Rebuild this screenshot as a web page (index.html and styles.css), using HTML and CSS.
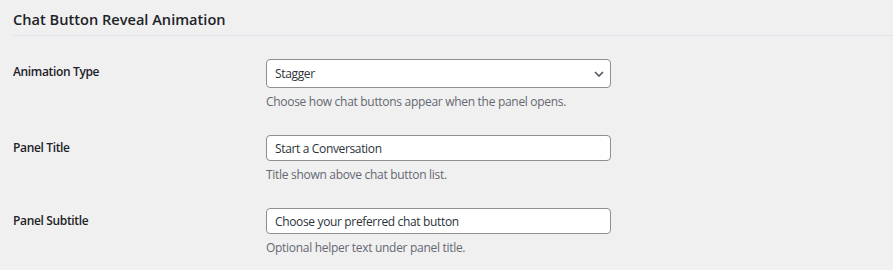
FILE: index.html
```html
<!DOCTYPE html>
<html>
<head>
<meta charset="utf-8">
<link rel="stylesheet" href="styles.css">
</head>
<body>
<div class="wrap">
  <h2 class="section-title">Chat Button Reveal Animation</h2>
  <div class="form-table">
    <div class="row">
      <div class="label">Animation Type</div>
      <div class="field">
        <div class="select">
          <span>Stagger</span>
          <svg class="chev" width="10" height="6" viewBox="0 0 10 6"><path d="M1 1l4 4 4-4" fill="none" stroke="#50575e" stroke-width="1.6"/></svg>
        </div>
        <p class="desc">Choose how chat buttons appear when the panel opens.</p>
      </div>
    </div>
    <div class="row">
      <div class="label">Panel Title</div>
      <div class="field">
        <div class="input">Start a Conversation</div>
        <p class="desc">Title shown above chat button list.</p>
      </div>
    </div>
    <div class="row">
      <div class="label">Panel Subtitle</div>
      <div class="field">
        <div class="input">Choose your preferred chat button</div>
        <p class="desc">Optional helper text under panel title.</p>
      </div>
    </div>
  </div>
</div>
</body>
</html>
```

FILE: styles.css
```css
html, body {
  margin: 0;
  padding: 0;
  background: #f0f0f1;
}
body {
  font-family: "Open Sans", "Noto Sans", sans-serif;
  color: #1d2327;
  font-size: 13px;
}
.wrap {
  padding-left: 13px;
}
.section-title {
  margin: 0;
  padding-top: 9px;
  height: 26px;
  font-size: 14.6px;
  font-weight: 600;
  line-height: 20px;
  border-bottom: 1px solid #dde3ea;
  box-sizing: content-box;
}
.form-table {
  padding-top: 11px;
}
.row {
  display: flex;
  padding: 12px 0;
}
.label {
  width: 253px;
  flex: none;
  font-weight: 600;
  font-size: 12px;
  letter-spacing: -0.35px;
  line-height: 18px;
  padding-top: 4px;
}
.field {
  width: 345px;
}
.select, .input {
  box-sizing: border-box;
  width: 345px;
  background: #fff;
  border: 1px solid #8c8f94;
  border-radius: 4px;
  padding: 0 8px;
  display: flex;
  align-items: center;
  font-size: 12px;
  letter-spacing: -0.35px;
  color: #2c3338;
}
.select {
  height: 29px;
  justify-content: space-between;
  padding-right: 6px;
}
.input {
  height: 26px;
}
.chev {
  display: block;
}
.desc {
  margin: 4px 0 0;
  line-height: 19px;
  font-size: 12px;
  letter-spacing: -0.3px;
  color: #646970;
}
```
